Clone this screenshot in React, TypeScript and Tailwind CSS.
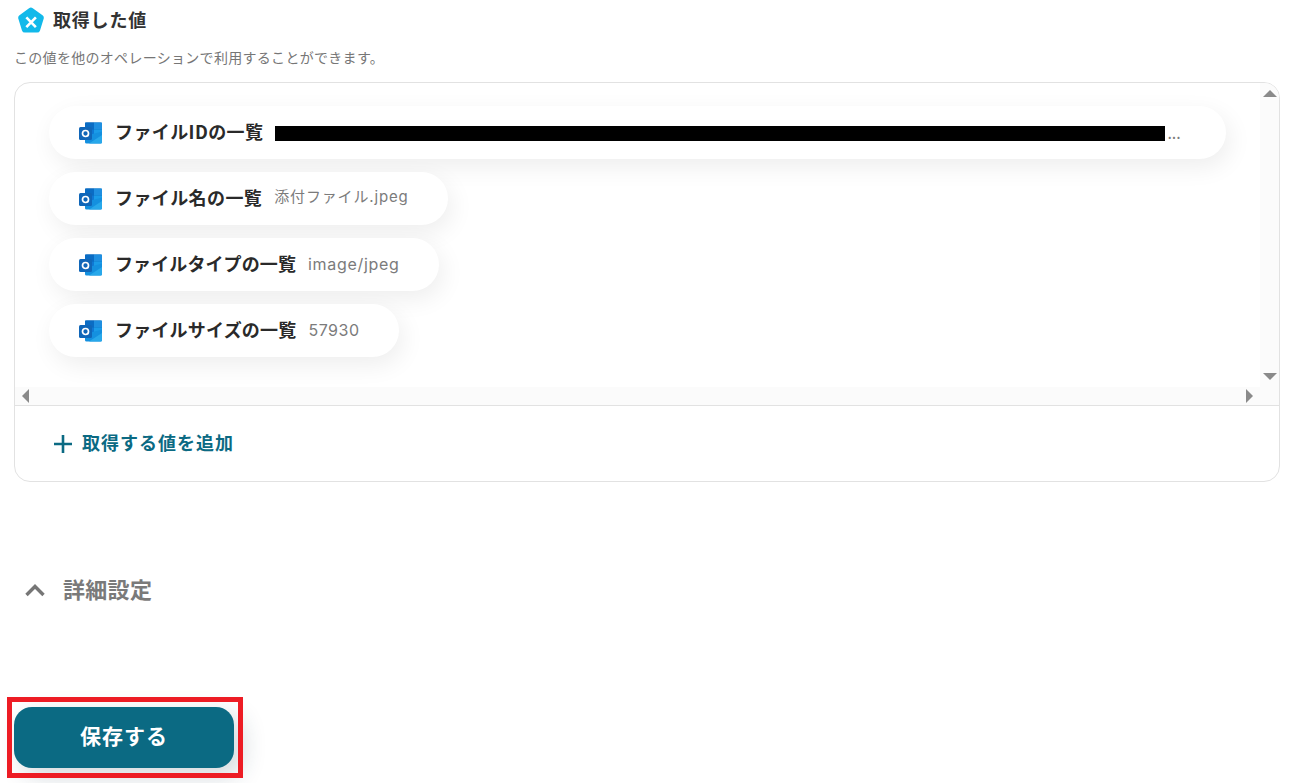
import React from 'react';

const font = { fontFamily: '"Noto Sans CJK JP", "Noto Sans", sans-serif' };
const valueFont = { fontFamily: 'Inter, "Noto Sans CJK JP", sans-serif' };

function OutlookIcon() {
  return (
    <svg width="24" height="24" viewBox="0 0 24 24" className="shrink-0">
      <rect x="6" y="1.5" width="17" height="20" rx="1.5" fill="#0364b8" />
      <rect x="6" y="1.5" width="9" height="7" fill="#0a6cc4" />
      <rect x="15" y="1.5" width="8" height="7" fill="#1f8fe0" />
      <rect x="6" y="8.5" width="9" height="7" fill="#0f78d4" />
      <rect x="15" y="8.5" width="8" height="7" fill="#1a9be8" />
      <path d="M6 15 L23 10.5 V21 a1.5 1.5 0 0 1 -1.5 1.5 H7.5 A1.5 1.5 0 0 1 6 21 Z" fill="#1490df" />
      <path d="M10 22.5 L23 14 V21 a1.5 1.5 0 0 1 -1.5 1.5 Z" fill="#28a8ea" />
      <rect x="0" y="6" width="13" height="13" rx="1.5" fill="#1066b8" />
      <circle cx="6.5" cy="12.5" r="3" fill="none" stroke="#fff" strokeWidth="1.7" />
    </svg>
  );
}

interface ValuePillProps {
  label: string;
  labelClass?: string;
  value?: string;
  valueClass?: string;
}

function ValuePill({ label, labelClass = 'tracking-[0.4px]', value, valueClass = 'text-[16px] tracking-[0.5px]' }: ValuePillProps) {
  return (
    <div
      className={`flex h-[53px] items-center rounded-full bg-white pl-[30px] shadow-[4px_8px_24px_rgba(0,0,0,0.07)] ${
        value ? 'w-fit pr-[39px]' : 'w-[1177px] pr-[45px]'
      }`}
    >
      <OutlookIcon />
      <span className={`ml-[12px] -translate-y-[1px] text-[18px] font-bold whitespace-nowrap text-[#2a2a2a] ${labelClass}`}>{label}</span>
      {value ? (
        <span className={`ml-[12px] -translate-y-[1px] whitespace-nowrap text-[#7b7b7b] ${valueClass}`} style={valueFont}>{value}</span>
      ) : (
        <span className="ml-[12px] flex items-center">
          <span className="h-[15px] w-[890px] translate-y-[1px] bg-black" />
          <span className="ml-[2px] text-[16px] leading-[15px] text-[#7b7b7b]">...</span>
        </span>
      )}
    </div>
  );
}

export default function App() {
  return (
    <div className="h-[783px] w-[1290px] overflow-hidden bg-white" style={font}>
      {/* Header */}
      <div className="flex h-[41px] items-center pl-[17px]">
        <svg width="28" height="28" viewBox="0 0 27 27" className="shrink-0">
          <path
            d="M11.6 1.2 a3 3 0 0 1 3.6 0 L24.6 8 a3 3 0 0 1 1.1 3.3 L22.2 22.6 a3 3 0 0 1 -2.9 2.1 H7.7 a3 3 0 0 1 -2.9 -2.1 L1.3 11.3 A3 3 0 0 1 2.4 8 Z"
            fill="#12b9ea"
          />
          <path d="M9 10 L18.2 19.5 M18.2 10 L9 19.5" stroke="#fff" strokeWidth="2.5" />
        </svg>
        <span className="ml-[8px] -translate-y-[1px] text-[18px] font-bold tracking-[0.8px] text-[#333333]">取得した値</span>
      </div>

      <p className="mt-[7px] pl-[14px] text-[14px] leading-[19px] tracking-[0.3px] text-[#767676]">
        この値を他のオペレーションで利用することができます。
      </p>

      {/* Card */}
      <div className="mx-[14px] mt-[15px] h-[400px] w-[1266px] overflow-hidden rounded-[16px] border border-[#e2e2e2]">
        <div className="relative h-[323px] border-b border-[#e2e2e2]">
          <div className="flex h-[304px] w-[1246px] flex-col gap-[13px] pt-[23px] pl-[34px]">
            <ValuePill label="ファイルIDの一覧" />
            <ValuePill label="ファイル名の一覧" value="添付ファイル.jpeg" valueClass="text-[15px] tracking-[0.85px]" />
            <ValuePill label="ファイルタイプの一覧" labelClass="tracking-[0.1px]" value="image/jpeg" valueClass="text-[16px] tracking-[0.7px]" />
            <ValuePill label="ファイルサイズの一覧" labelClass="tracking-[0.2px]" value="57930" />
          </div>

          {/* Scrollbars */}
          <div className="absolute top-0 right-0 flex h-[304px] w-[19px] flex-col items-center justify-between bg-[#fbfbfb] pt-[7px] pb-[7px]">
            <span className="h-0 w-0 border-x-[7px] border-b-[7px] border-x-transparent border-b-[#8a8a8a]" />
            <span className="h-0 w-0 border-x-[7px] border-t-[7px] border-x-transparent border-t-[#8a8a8a]" />
          </div>
          <div className="absolute right-0 bottom-0 left-0 flex h-[18px] items-center justify-between bg-[#fbfbfb] pr-[26px] pl-[7px]">
            <span className="h-0 w-0 border-y-[7px] border-r-[7px] border-y-transparent border-r-[#8a8a8a]" />
            <span className="h-0 w-0 border-y-[7px] border-l-[7px] border-y-transparent border-l-[#8a8a8a]" />
          </div>
        </div>

        <div className="flex h-[75px] items-center pl-[38px]">
          <svg width="20" height="20" viewBox="0 0 20 20" className="shrink-0">
            <path d="M10 1 V19 M1 10 H19" stroke="#0b6a83" strokeWidth="2.6" />
          </svg>
          <span className="ml-[9px] -translate-y-[1px] text-[18px] font-bold tracking-[1px] text-[#0b6a83]">取得する値を追加</span>
        </div>
      </div>

      {/* Advanced settings */}
      <div className="mt-[90px] flex h-[36px] items-center pl-[24px]">
        <svg width="22" height="14" viewBox="0 0 22 14" className="shrink-0">
          <path d="M2.5 12 L11 3.5 L19.5 12" fill="none" stroke="#767676" strokeWidth="3.4" />
        </svg>
        <span className="ml-[17px] -translate-y-[2px] text-[22px] font-bold tracking-[0.3px] text-[#7a7a7a]">詳細設定</span>
      </div>

      {/* Save button, the red frame is an annotation over it */}
      <div className="relative mt-[99px] ml-[14px] h-[61px] w-[220px]">
        <button className="flex h-[61px] w-[220px] items-center justify-center rounded-[18px] bg-[#0b6a83] pb-[3px] text-[21px] font-bold tracking-[1px] text-white shadow-[8px_8px_24px_rgba(30,60,80,0.2)]">
          保存する
        </button>
        <div className="pointer-events-none absolute -top-[10px] -right-[9px] -bottom-[10px] -left-[7px] border-[5px] border-[#ed1c24]" />
      </div>
    </div>
  );
}
